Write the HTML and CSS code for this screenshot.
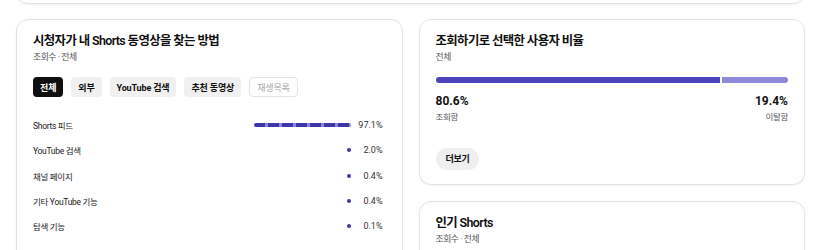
FILE: index.html
```html
<!DOCTYPE html>
<html lang="ko">
<head>
<meta charset="utf-8">
<title>Shorts 분석</title>
<link rel="stylesheet" href="styles.css">
</head>
<body>
<div class="page">
  <div class="card top-card"></div>

  <section class="card sources">
    <h2 class="card-title">시청자가 내 Shorts 동영상을 찾는 방법</h2>
    <p class="card-sub">조회수 · 전체</p>
    <div class="chips">
      <span class="chip active">전체</span>
      <span class="chip">외부</span>
      <span class="chip">YouTube 검색</span>
      <span class="chip">추천 동영상</span>
      <span class="chip disabled">재생목록</span>
    </div>
    <ul class="rows">
      <li class="row"><span class="label">Shorts 피드</span><span class="track"><span class="bar striped" style="width:97px"></span></span><span class="value">97.1%</span></li>
      <li class="row"><span class="label">YouTube 검색</span><span class="track"><span class="bar" style="width:2px"></span></span><span class="value">2.0%</span></li>
      <li class="row"><span class="label">채널 페이지</span><span class="track"><span class="bar" style="width:0.4px"></span></span><span class="value">0.4%</span></li>
      <li class="row"><span class="label">기타 YouTube 기능</span><span class="track"><span class="bar" style="width:0.4px"></span></span><span class="value">0.4%</span></li>
      <li class="row"><span class="label">탐색 기능</span><span class="track"><span class="bar" style="width:0.1px"></span></span><span class="value">0.1%</span></li>
    </ul>
  </section>

  <div class="side">
    <section class="card ratio">
      <h2 class="card-title">조회하기로 선택한 사용자 비율</h2>
      <p class="card-sub">전체</p>
      <div class="ratio-bar">
        <span class="viewed" style="width:80.6%"></span>
        <span class="swiped"></span>
      </div>
      <div class="stats">
        <div class="stat">
          <div class="stat-num">80.6%</div>
          <div class="stat-label">조회함</div>
        </div>
        <div class="stat right">
          <div class="stat-num">19.4%</div>
          <div class="stat-label">이탈함</div>
        </div>
      </div>
      <div class="actions"><button class="more" type="button">더보기</button></div>
    </section>

    <section class="card popular">
      <h2 class="card-title">인기 Shorts</h2>
      <p class="card-sub">조회수 · 전체</p>
    </section>
  </div>
</div>
</body>
</html>
```

FILE: styles.css
```css
* {
  box-sizing: border-box;
  margin: 0;
  padding: 0;
}

body {
  background: #ffffff;
  font-family: Roboto, "Noto Sans CJK KR", sans-serif;
  color: #0f0f0f;
}

.page {
  display: grid;
  grid-template-columns: 1fr 1fr;
  column-gap: 16px;
  row-gap: 15px;
  padding: 0 15px 0 16px;
}

.card {
  background: #ffffff;
  border: 1px solid #e4e4e4;
  border-radius: 12px;
  box-shadow: 0 1px 2px rgba(0, 0, 0, 0.05);
  padding: 13px 16px 16px;
}

.top-card {
  grid-column: 1 / -1;
  height: 60px;
  margin-top: -56px;
}

.card-title {
  font-size: 12.4px;
  line-height: 16px;
  font-weight: 600;
  letter-spacing: -0.6px;
}

.card-sub {
  margin-top: 2px;
  font-size: 8.8px;
  line-height: 12px;
  color: #555555;
  letter-spacing: -0.45px;
}

.chips {
  display: flex;
  gap: 8px;
  margin-top: 14px;
}

.chip {
  display: flex;
  align-items: center;
  height: 20px;
  padding: 0 7px;
  border-radius: 4px;
  background: #f0f0f0;
  font-size: 9px;
  font-weight: 700;
  letter-spacing: -0.15px;
}

.chip.active {
  background: #0f0f0f;
  color: #ffffff;
}

.chip.disabled {
  background: #ffffff;
  border: 1px solid #e3e3e3;
  color: #a8a8a8;
  font-weight: 400;
}

.rows {
  list-style: none;
  margin-top: 15.5px;
  padding-right: 3px;
}

.row {
  display: flex;
  align-items: center;
  height: 25.3px;
}

.label {
  flex: 1;
  font-size: 8.5px;
  letter-spacing: -0.3px;
  color: #1a1a1a;
}

.track {
  width: 98px;
  display: flex;
  justify-content: flex-end;
}

.bar {
  height: 4px;
  min-width: 4px;
  border-radius: 2px;
  background: #3d35a8;
}

.bar.striped {
  background: repeating-linear-gradient(90deg, #3d35a8 0 11px, #8985d2 11px 14px);
}

.value {
  width: 32px;
  text-align: right;
  font-size: 9px;
  color: #333333;
}

.side {
  display: flex;
  flex-direction: column;
  gap: 16px;
}

.ratio {
  padding-bottom: 14px;
}

.ratio-bar {
  display: flex;
  gap: 2px;
  height: 6px;
  margin-top: 14px;
}

.viewed {
  background: #4b44bd;
  border-radius: 3px 0 0 3px;
}

.swiped {
  flex: 1;
  background: #8e88dd;
  border-radius: 0 3px 3px 0;
}

.stats {
  display: flex;
  justify-content: space-between;
  margin-top: 11px;
}

.stat.right {
  text-align: right;
}

.stat-num {
  font-size: 12px;
  line-height: 15px;
  font-weight: 700;
}

.stat-label {
  margin-top: 2px;
  font-size: 8.5px;
  line-height: 12px;
  color: #555555;
  letter-spacing: -0.3px;
}

.actions {
  margin-top: 24px;
}

.more {
  height: 22px;
  padding: 0 10px;
  border: 0;
  border-radius: 11px;
  background: #efefef;
  color: #0f0f0f;
  font-family: inherit;
  font-size: 9px;
  font-weight: 700;
  letter-spacing: -0.3px;
}

.popular {
  min-height: 90px;
}
```
